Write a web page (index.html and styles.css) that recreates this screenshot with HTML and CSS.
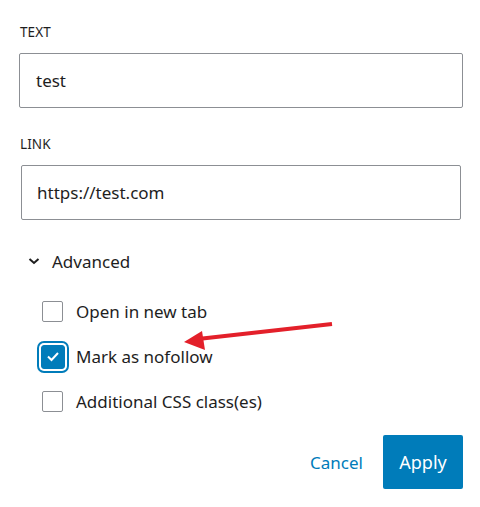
FILE: index.html
```html
<!DOCTYPE html>
<html>
<head>
<meta charset="utf-8">
<link rel="stylesheet" href="styles.css">
</head>
<body>
<div class="panel">
  <div class="field field-text">
    <div class="label">TEXT</div>
    <div class="input input-a">test</div>
  </div>
  <div class="field field-link">
    <div class="label">LINK</div>
    <div class="input input-b">https://test.com</div>
  </div>
  <div class="advanced">
    <svg class="chev" width="12" height="8" viewBox="0 0 12 8"><path d="M1.5 2 L6 6 L10.5 2" fill="none" stroke="#1e1e1e" stroke-width="2"/></svg>
    <span>Advanced</span>
  </div>
  <div class="options">
    <div class="opt"><span class="cbcell"><span class="cb"></span></span><span>Open in new tab</span></div>
    <div class="opt"><span class="cbcell"><span class="cb checked"><svg width="14" height="11" viewBox="0 0 14 11"><path d="M2 5.5 L5.5 9 L12 2" fill="none" stroke="#fff" stroke-width="2"/></svg></span></span><span>Mark as nofollow</span></div>
    <div class="opt"><span class="cbcell"><span class="cb"></span></span><span>Additional CSS class(es)</span></div>
  </div>
  <div class="actions">
    <span class="cancel">Cancel</span>
    <span class="apply">Apply</span>
  </div>
  <svg class="arrow" width="480" height="507" viewBox="0 0 480 507">
    <line x1="332" y1="324" x2="198" y2="339" stroke="#e3202a" stroke-width="4"/>
    <polygon points="184,342 202,331 205,350" fill="#e3202a"/>
  </svg>
</div>
</body>
</html>
```
FILE: styles.css
```css
html, body {
  margin: 0;
  padding: 0;
  background: #fff;
}
body {
  font-family: "Noto Sans", "Open Sans", sans-serif;
  color: #1e1e1e;
  width: 480px;
  height: 507px;
  overflow: hidden;
}
.panel {
  position: relative;
  padding: 22px 18px 0 20px;
}
.label {
  font-size: 13.5px;
  line-height: 20px;
  letter-spacing: 0.1px;
}
.field-text .label { margin-bottom: 11px; }
.field-link .label { margin-bottom: 11px; }
.field-link { margin-top: 26px; }
.input {
  border: 1px solid #8c8f94;
  border-radius: 2px;
  display: flex;
  align-items: center;
  font-size: 17px;
  box-sizing: border-box;
  height: 55px;
}
.input-a { margin-left: -1px; margin-right: -1px; padding-left: 16px; }
.input-b { margin-left: 1px; margin-right: 1px; padding-left: 15px; }
.advanced {
  display: flex;
  align-items: center;
  margin-top: 29px;
  padding-left: 8px;
  height: 24px;
  font-size: 17px;
}
.chev { margin-right: 12px; }
.options {
  margin-top: 28px;
  padding-left: 22px;
  display: flex;
  flex-direction: column;
  gap: 24px;
}
.opt {
  display: flex;
  align-items: center;
  height: 21px;
  font-size: 17px;
}
.cbcell {
  width: 21px;
  height: 21px;
  display: flex;
  align-items: center;
  justify-content: center;
  margin-right: 13px;
}
.cb {
  flex: none;
  width: 21px;
  height: 21px;
  box-sizing: border-box;
  border: 1px solid #8c8f94;
  border-radius: 2px;
  background: #fff;
}
.cb.checked {
  width: 24px;
  height: 24px;
  background: #007cba;
  border-color: #007cba;
  box-shadow: 0 0 0 2px #fff, 0 0 0 4px #007cba;
  display: flex;
  align-items: center;
  justify-content: center;
  border-radius: 3px;
}
.actions {
  display: flex;
  justify-content: flex-end;
  align-items: center;
  gap: 20px;
  margin-top: 23px;
  margin-right: -1px;
}
.cancel {
  color: #007cba;
  font-size: 17px;
}
.apply {
  background: #007cba;
  color: #fff;
  font-size: 18px;
  width: 80px;
  height: 54px;
  border-radius: 2px;
  display: flex;
  align-items: center;
  justify-content: center;
}
.arrow {
  position: absolute;
  left: 0;
  top: 0;
  pointer-events: none;
}
```
